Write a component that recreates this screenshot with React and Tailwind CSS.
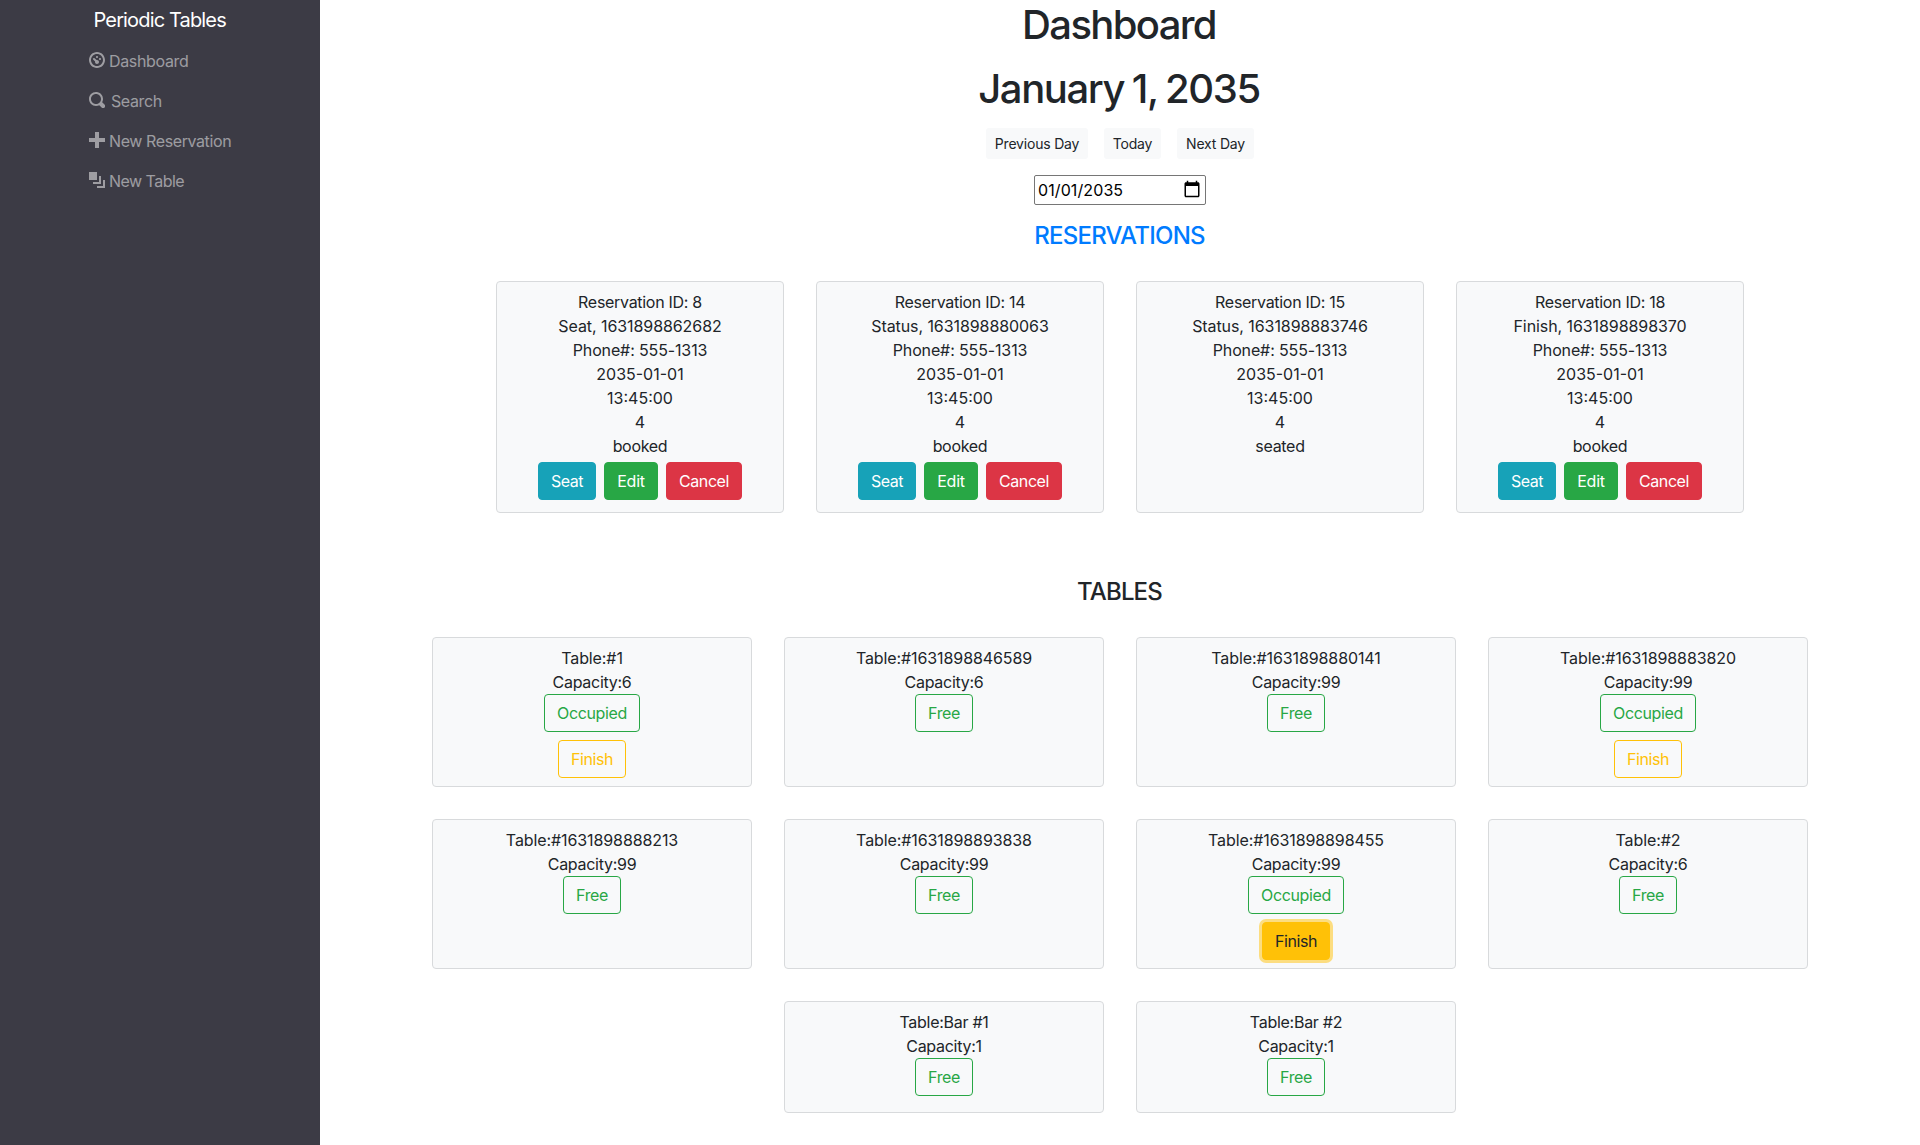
import React from "react";

const ICONS = {
  dashboard:
    "M4 0c-2.2 0-4 1.8-4 4s1.8 4 4 4 4-1.8 4-4-1.8-4-4-4zm0 1c1.66 0 3 1.34 3 3s-1.34 3-3 3-3-1.34-3-3 1.34-3 3-3zm0 1c-.28 0-.5.22-.5.5s.22.5.5.5.5-.22.5-.5-.22-.5-.5-.5zm-1.66 1a.5.5 0 0 0-.19.84l.91.91c-.02.08-.06.16-.06.25 0 .55.45 1 1 1s1-.45 1-1-.45-1-1-1c-.09 0-.17.04-.25.06l-.91-.91a.5.5 0 0 0-.44-.16zm3.16 0c-.28 0-.5.22-.5.5s.22.5.5.5.5-.22.5-.5-.22-.5-.5-.5z",
  search:
    "M3.5 0c-1.93 0-3.5 1.57-3.5 3.5s1.57 3.5 3.5 3.5c.59 0 1.17-.14 1.66-.41a1 1 0 0 0 .13.13l1 1a1.02 1.02 0 1 0 1.44-1.44l-1-1a1 1 0 0 0-.16-.13c.27-.49.44-1.06.44-1.66 0-1.93-1.55-3.5-3.5-3.5zm0 1c1.39 0 2.5 1.11 2.5 2.5 0 .66-.24 1.27-.66 1.72-.01.01-.02.02-.03.03a1 1 0 0 0-.13.13c-.44.4-1.04.63-1.69.63-1.39 0-2.5-1.11-2.5-2.5s1.11-2.5 2.5-2.5z",
  plus: "M3 0v3h-3v2h3v3h2v-3h3v-2h-3v-3h-2z",
  layers: "M0 0v4h4v-4h-4zm5 2v3h-3v1h4v-4h-1zm2 2v3h-3v1h4v-4h-1z",
};

const NAV = [
  { icon: "dashboard", label: "Dashboard", style: "ml-1 tracking-[-0.35px]" },
  { icon: "search", label: "Search", style: "ml-1.5 tracking-[-0.4px]" },
  { icon: "plus", label: "New Reservation", style: "ml-1 tracking-[-0.4px]" },
  { icon: "layers", label: "New Table", style: "ml-1 tracking-[-0.52px]" },
];

const RESERVATIONS = [
  { id: 8, first: "Seat", last: "1631898862682", status: "booked" },
  { id: 14, first: "Status", last: "1631898880063", status: "booked" },
  { id: 15, first: "Status", last: "1631898883746", status: "seated" },
  { id: 18, first: "Finish", last: "1631898898370", status: "booked" },
];

const TABLES = [
  { name: "#1", capacity: 6, occupied: true },
  { name: "#1631898846589", capacity: 6 },
  { name: "#1631898880141", capacity: 99 },
  { name: "#1631898883820", capacity: 99, occupied: true },
  { name: "#1631898888213", capacity: 99 },
  { name: "#1631898893838", capacity: 99 },
  { name: "#1631898898455", capacity: 99, occupied: true, focused: true },
  { name: "#2", capacity: 6 },
  { name: "Bar #1", capacity: 1 },
  { name: "Bar #2", capacity: 1 },
];

function Sidebar() {
  return (
    <nav className="w-80 shrink-0 bg-[#3c3b45]">
      <div className="pt-1 pl-[93.5px] text-xl leading-8 tracking-[-0.85px] text-white">Periodic Tables</div>
      <ul className="pt-1 pl-[89px]">
        {NAV.map((n) => (
          <li key={n.label} className="flex h-10 items-center text-white/50">
            <svg className="size-4" viewBox="0 0 8 8" fill="currentColor">
              <path d={ICONS[n.icon]} />
            </svg>
            <span className={`pt-0.5 ${n.style}`}>{n.label}</span>
          </li>
        ))}
      </ul>
    </nav>
  );
}

function DayButton({ className, children }) {
  return (
    <button className={`h-[31px] rounded-[3px] bg-[#f8f9fa] text-sm tracking-[-0.2px] ${className}`}>{children}</button>
  );
}

function Button({ className, children }) {
  return <button className={`h-[38px] rounded border text-base ${className}`}>{children}</button>;
}

function ReservationCard({ r }) {
  return (
    <div className="h-[232px] w-72 rounded border border-[#d8dadc] bg-[#f8f9fa] py-2 text-center">
      <p className="tracking-[-0.3px]">Reservation ID: {r.id}</p>
      <p className="tracking-[-0.08px]">
        {r.first}, {r.last}
      </p>
      <p className="tracking-[-0.13px]">Phone#: 555-1313</p>
      <p>2035-01-01</p>
      <p>13:45:00</p>
      <p>4</p>
      <p className="tracking-[-0.3px]">{r.status}</p>
      {r.status === "booked" && (
        <div className="mt-1 flex justify-center gap-2 text-white">
          <Button className="w-[58px] border-[#17a2b8] bg-[#17a2b8] tracking-[-0.45px]">Seat</Button>
          <Button className="w-[54px] border-[#28a745] bg-[#28a745] tracking-[-0.2px]">Edit</Button>
          <Button className="w-[76px] border-[#dc3545] bg-[#dc3545] tracking-[-0.4px]">Cancel</Button>
        </div>
      )}
    </div>
  );
}

function TableCard({ t }) {
  return (
    <div className="flex min-h-28 w-80 flex-col items-center rounded border border-[#d8dadc] bg-[#f8f9fa] py-2">
      <p className={t.name.startsWith("Bar") ? "tracking-[-0.28px]" : "tracking-[-0.1px]"}>Table:{t.name}</p>
      <p className="tracking-[-0.28px]">Capacity:{t.capacity}</p>
      {t.occupied ? (
        <>
          <Button className="w-24 border-[#28a745] tracking-[-0.35px] text-[#28a745]">Occupied</Button>
          <Button
            className={`mt-2 w-[68px] border-[#ffc107] tracking-[-0.4px] ${
              t.focused ? "bg-[#ffc107] text-[#212529] ring-3 ring-[#ffc107]/50" : "text-[#ffc107]"
            }`}
          >
            Finish
          </Button>
        </>
      ) : (
        <Button className="w-[58px] border-[#28a745] tracking-[-0.35px] text-[#28a745]">Free</Button>
      )}
    </div>
  );
}

export default function App() {
  return (
    <div className="flex h-[1145px] overflow-hidden bg-white font-['Inter',sans-serif] text-base leading-6 text-[#212529]">
      <Sidebar />
      <main className="flex flex-1 flex-col items-center">
        <h1 className="h-12 pr-0.5 text-[40px] leading-[50px] font-medium tracking-[-1.65px]">Dashboard</h1>
        <h1 className="mt-4 h-12 pr-0.5 text-[40px] leading-[50px] font-medium tracking-[-1.4px] [word-spacing:-1.5px]">
          January 1, 2035
        </h1>
        <div className="mt-4 flex gap-4">
          <DayButton className="w-[102px]">Previous Day</DayButton>
          <DayButton className="w-[57px]">Today</DayButton>
          <DayButton className="w-[77px]">Next Day</DayButton>
        </div>
        <div className="mt-4 flex h-[30px] w-[172px] items-center justify-between rounded-[2px] border border-[#767676] pr-1 pl-[3px] text-black">
          <span className="tracking-[0.1px]">01/01/2035</span>
          <svg className="relative -top-px size-[18px]" viewBox="0 0 24 24" fill="currentColor">
            <path d="M20 3h-1V1h-2v2H7V1H5v2H4c-1.1 0-2 .9-2 2v16c0 1.1.9 2 2 2h16c1.1 0 2-.9 2-2V5c0-1.1-.9-2-2-2zm0 18H4V8h16v13z" />
          </svg>
        </div>
        <h4 className="mt-4 h-[29px] pr-px text-2xl leading-[29px] font-medium tracking-[-0.75px] text-[#007bff]">
          RESERVATIONS
        </h4>
        <section className="mt-[31px] flex gap-8">
          {RESERVATIONS.map((r) => (
            <ReservationCard key={r.id} r={r} />
          ))}
        </section>
        <h4 className="mt-16 h-[29px] pr-px text-2xl leading-[29px] font-medium tracking-[-0.85px]">TABLES</h4>
        <section className="mt-[31px] flex w-[1376px] flex-wrap justify-center gap-8">
          {TABLES.map((t) => (
            <TableCard key={t.name} t={t} />
          ))}
        </section>
      </main>
    </div>
  );
}
